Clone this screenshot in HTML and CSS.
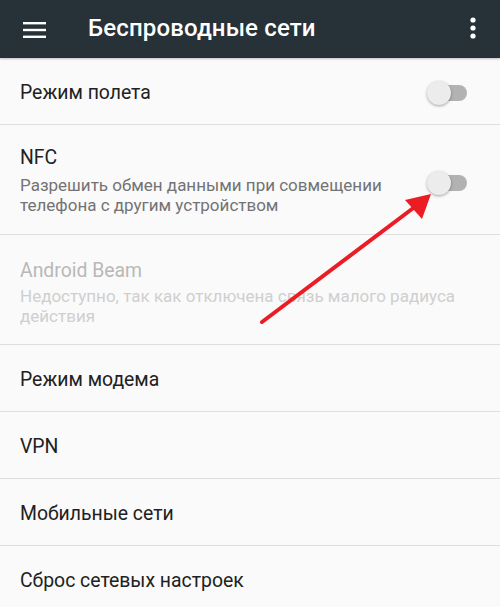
FILE: index.html
```html
<!DOCTYPE html>
<html lang="ru">
<head>
  <meta charset="UTF-8" />
  <title>Беспроводные сети</title>
  <link rel="stylesheet" href="styles.css">
</head>
<body>

  <div class="toolbar">
    <svg class="menu-icon" width="24" height="18" viewBox="0 0 24 18">
      <rect x="0" y="1" width="23" height="2.4" fill="#fff"/>
      <rect x="0" y="7.8" width="23" height="2.4" fill="#fff"/>
      <rect x="0" y="14.6" width="23" height="2.4" fill="#fff"/>
    </svg>
    <div class="toolbar-title">Беспроводные сети</div>
    <svg class="more-icon" width="6" height="22" viewBox="0 0 6 22">
      <circle cx="3" cy="3" r="2.6" fill="#fff"/>
      <circle cx="3" cy="11" r="2.6" fill="#fff"/>
      <circle cx="3" cy="19" r="2.6" fill="#fff"/>
    </svg>
  </div>

  <div class="list">

    <div class="row">
      <div class="texts">
        <div class="title">Режим полета</div>
      </div>
      <div class="switch"><span class="thumb"></span></div>
    </div>

    <div class="row tall">
      <div class="texts">
        <div class="title">NFC</div>
        <div class="summary">Разрешить обмен данными при совмещении телефона с другим устройством</div>
      </div>
      <div class="switch"><span class="thumb"></span></div>
    </div>

    <div class="row tall disabled">
      <div class="texts">
        <div class="title">Android Beam</div>
        <div class="summary">Недоступно, так как отключена связь малого радиуса действия</div>
      </div>
    </div>

    <div class="row">
      <div class="texts"><div class="title">Режим модема</div></div>
    </div>

    <div class="row">
      <div class="texts"><div class="title">VPN</div></div>
    </div>

    <div class="row">
      <div class="texts"><div class="title">Мобильные сети</div></div>
    </div>

    <div class="row">
      <div class="texts"><div class="title">Сброс сетевых настроек</div></div>
    </div>

  </div>

  <!-- стрелка-указатель поверх списка -->
  <svg class="arrow" width="500" height="607" viewBox="0 0 500 607">
    <line x1="262" y1="322" x2="416" y2="206" stroke="#ec1c24" stroke-width="4" stroke-linecap="round"/>
    <polygon points="431,194 405,200 422,219" fill="#ec1c24"/>
  </svg>

</body>
</html>
```

FILE: styles.css
```css
body {
  margin: 0;
  padding: 0;
  background: #fafafa;
  font-family: Roboto, "Noto Sans", sans-serif;
  width: 500px;
  height: 607px;
  overflow: hidden;
  position: relative;
}

/* Верхняя панель */
.toolbar {
  height: 58px;
  background: #263238;
  display: flex;
  align-items: center;
  padding: 0 24px 0 23px;
  box-sizing: border-box;
  box-shadow: 0 1px 2px rgba(0,0,0,0.25);
  position: relative;
  z-index: 2;
}
.menu-icon {
  flex: none;
  margin-top: 1px;
}
.toolbar-title {
  flex: 1;
  margin-left: 41px;
  color: #fff;
  font-size: 24px;
  font-weight: 500;
  letter-spacing: 0.15px;
  margin-top: -3px;
}
.more-icon {
  flex: none;
  margin-top: -2px;
}

/* Список настроек */
.list {
  display: flex;
  flex-direction: column;
}
.row {
  box-sizing: border-box;
  height: 67px;
  border-bottom: 1px solid #dedede;
  display: flex;
  align-items: center;
  padding: 3px 20px 0;
}
.row.tall {
  align-items: flex-start;
  padding-top: 21px;
  height: 110px;
}
.row.tall.disabled {
  padding-top: 24px;
}
.texts {
  flex: 1;
}
.title {
  font-size: 19.4px;
  color: #212121;
}
.summary {
  font-size: 17px;
  line-height: 20px;
  color: #737373;
  margin-top: 6px;
}
.disabled .title {
  color: #b8b8b8;
}
.disabled .summary {
  color: #cfcfcf;
  margin-top: 4px;
}

/* Переключатель */
.switch {
  flex: none;
  width: 38px;
  height: 16px;
  border-radius: 8px;
  background: #b2b2b2;
  position: relative;
  margin-right: 13px;
  margin-left: 12px;
}
.row.tall .switch {
  margin-top: 29px;
}
.switch .thumb {
  position: absolute;
  left: -2px;
  top: -4px;
  width: 24px;
  height: 24px;
  border-radius: 50%;
  background: #ececec;
  box-shadow: 0 1px 3px rgba(0,0,0,0.35);
}

.arrow {
  position: absolute;
  left: 0;
  top: 0;
  pointer-events: none;
}
```
